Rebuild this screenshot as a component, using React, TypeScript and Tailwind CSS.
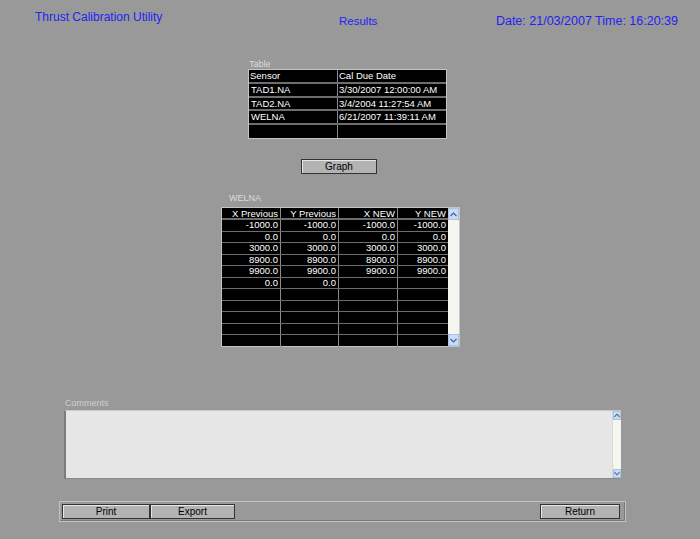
import React from "react";

const font = { fontFamily: '"Liberation Sans", Arial, sans-serif' };

const sensors = [
  ["TAD1.NA", "3/30/2007 12:00:00 AM"],
  ["TAD2.NA", "3/4/2004 11:27:54 AM"],
  ["WELNA", "6/21/2007 11:39:11 AM"],
  ["", ""],
];

const points = [
  ["-1000.0", "-1000.0", "-1000.0", "-1000.0"],
  ["0.0", "0.0", "0.0", "0.0"],
  ["3000.0", "3000.0", "3000.0", "3000.0"],
  ["8900.0", "8900.0", "8900.0", "8900.0"],
  ["9900.0", "9900.0", "9900.0", "9900.0"],
  ["0.0", "0.0", "", ""],
  ["", "", "", ""],
  ["", "", "", ""],
  ["", "", "", ""],
  ["", "", "", ""],
  ["", "", "", ""],
];

const colW = ["w-[59px]", "w-[58px]", "w-[59px]", "w-[50px]"];

function ArrowBox({ up, size }: { up: boolean; size: string }) {
  return (
    <div
      className={`${size} flex items-center justify-center bg-[#c9dcf7] border border-[#a9c1e6]`}
    >
      <svg width="7" height="5" viewBox="0 0 7 5">
        <path
          d={up ? "M0.5 4 L3.5 1 L6.5 4" : "M0.5 1 L3.5 4 L6.5 1"}
          fill="none"
          stroke="#4a5f8a"
          strokeWidth="1.2"
        />
      </svg>
    </div>
  );
}

function Button({ label, w }: { label: string; w: string }) {
  return (
    <div
      className={`${w} h-[15px] flex items-center justify-center bg-[#b3b3b3] border border-[#333] shadow-[inset_1px_1px_0_#e8e8e8] text-[10px] text-black`}
    >
      {label}
    </div>
  );
}

export default function App() {
  return (
    <div
      className="w-[700px] h-[539px] bg-[#999999] overflow-hidden relative"
      style={font}
    >
      {/* header */}
      <div className="flex items-start pt-[10px] pl-[35px] pr-[22px] text-[#2323f2]">
        <div className="w-[304px] text-[12px] leading-[14px]">
          Thrust Calibration Utility
        </div>
        <div className="mt-[4px] text-[11.5px] leading-[14px]">Results</div>
        <div className="ml-auto mt-[4px] text-[12.5px] leading-[14px]">
          Date: 21/03/2007 Time: 16:20:39
        </div>
      </div>

      {/* sensor table */}
      <div className="ml-[249px] mt-[31px] text-[9px] leading-[10px] text-[#dcdcdc]">
        Table
      </div>
      <div className="ml-[248px] w-[199px] border border-[#c4c4c4] bg-black text-white text-[9.5px]">
        <div className="flex h-[14px] border-b-2 border-[#6e6e6e] leading-[12px]">
          <div className="w-[89px] border-r border-[#8a8a8a] pl-[1px]">Sensor</div>
          <div className="flex-1 pl-[1px]">Cal Due Date</div>
        </div>
        {sensors.map((r, i) => (
          <div
            key={i}
            className={`flex h-[13.5px] leading-[12px] ${i < 3 ? "border-b-2 border-[#6e6e6e]" : ""}`}
          >
            <div className="w-[89px] border-r border-[#8a8a8a] pl-[2px]">{r[0]}</div>
            <div className="flex-1 pl-[1px]">{r[1]}</div>
          </div>
        ))}
      </div>

      {/* graph button */}
      <div className="ml-[301px] mt-[20px]">
        <Button label="Graph" w="w-[76px]" />
      </div>

      {/* WELNA table */}
      <div className="ml-[229px] mt-[19px] text-[9px] leading-[10px] text-[#dcdcdc]">
        WELNA
      </div>
      <div className="ml-[221px] mt-[4px] flex w-[239px] h-[140px] border border-[#c4c4c4]">
        <div className="w-[226px] bg-black text-white text-[9.5px]">
          <div className="flex h-[12px] border-b-2 border-[#6e6e6e] leading-[11px]">
            {["X Previous", "Y Previous", "X NEW", "Y NEW"].map((h, i) => (
              <div
                key={h}
                className={`${colW[i]} text-right pr-[2px] ${i < 3 ? "border-r border-[#8a8a8a]" : ""}`}
              >
                {h}
              </div>
            ))}
          </div>
          {points.map((r, j) => (
            <div
              key={j}
              className={`flex h-[11.5px] leading-[10px] ${j < 10 ? "border-b border-[#6e6e6e]" : ""}`}
            >
              {r.map((c, i) => (
                <div
                  key={i}
                  className={`${colW[i]} text-right pr-[2px] ${i < 3 ? "border-r border-[#8a8a8a]" : ""}`}
                >
                  {c}
                </div>
              ))}
            </div>
          ))}
        </div>
        <div className="flex-1 flex flex-col justify-between bg-[#f6f6f0]">
          <ArrowBox up size="h-[12px]" />
          <ArrowBox up={false} size="h-[12px]" />
        </div>
      </div>

      {/* comments */}
      <div className="ml-[65px] mt-[51px] text-[9px] leading-[10px] text-[#cfcfcf]">
        Comments
      </div>
      <div className="ml-[64px] mt-[2px] flex w-[557px] h-[69px] bg-[#e6e6e6] border-t border-[#c8c8c8] border-l-2 border-l-[#7c7c7c] border-b border-b-[#8a8a8a]">
        <div className="flex-1" />
        <div className="w-[9px] flex flex-col justify-between bg-[#f6f6f0] border-l border-[#d8d8d8]">
          <ArrowBox up size="h-[9px]" />
          <ArrowBox up={false} size="h-[9px]" />
        </div>
      </div>

      {/* bottom bar */}
      <div className="ml-[59px] mt-[22px] w-[567px] h-[21px] flex items-center pl-[2px] pr-[5px] border border-[#c2c2c2] shadow-[inset_-1px_-1px_0_#7a7a7a]">
        <Button label="Print" w="w-[88px]" />
        <Button label="Export" w="w-[85px]" />
        <div className="flex-1" />
        <Button label="Return" w="w-[80px]" />
      </div>
    </div>
  );
}
